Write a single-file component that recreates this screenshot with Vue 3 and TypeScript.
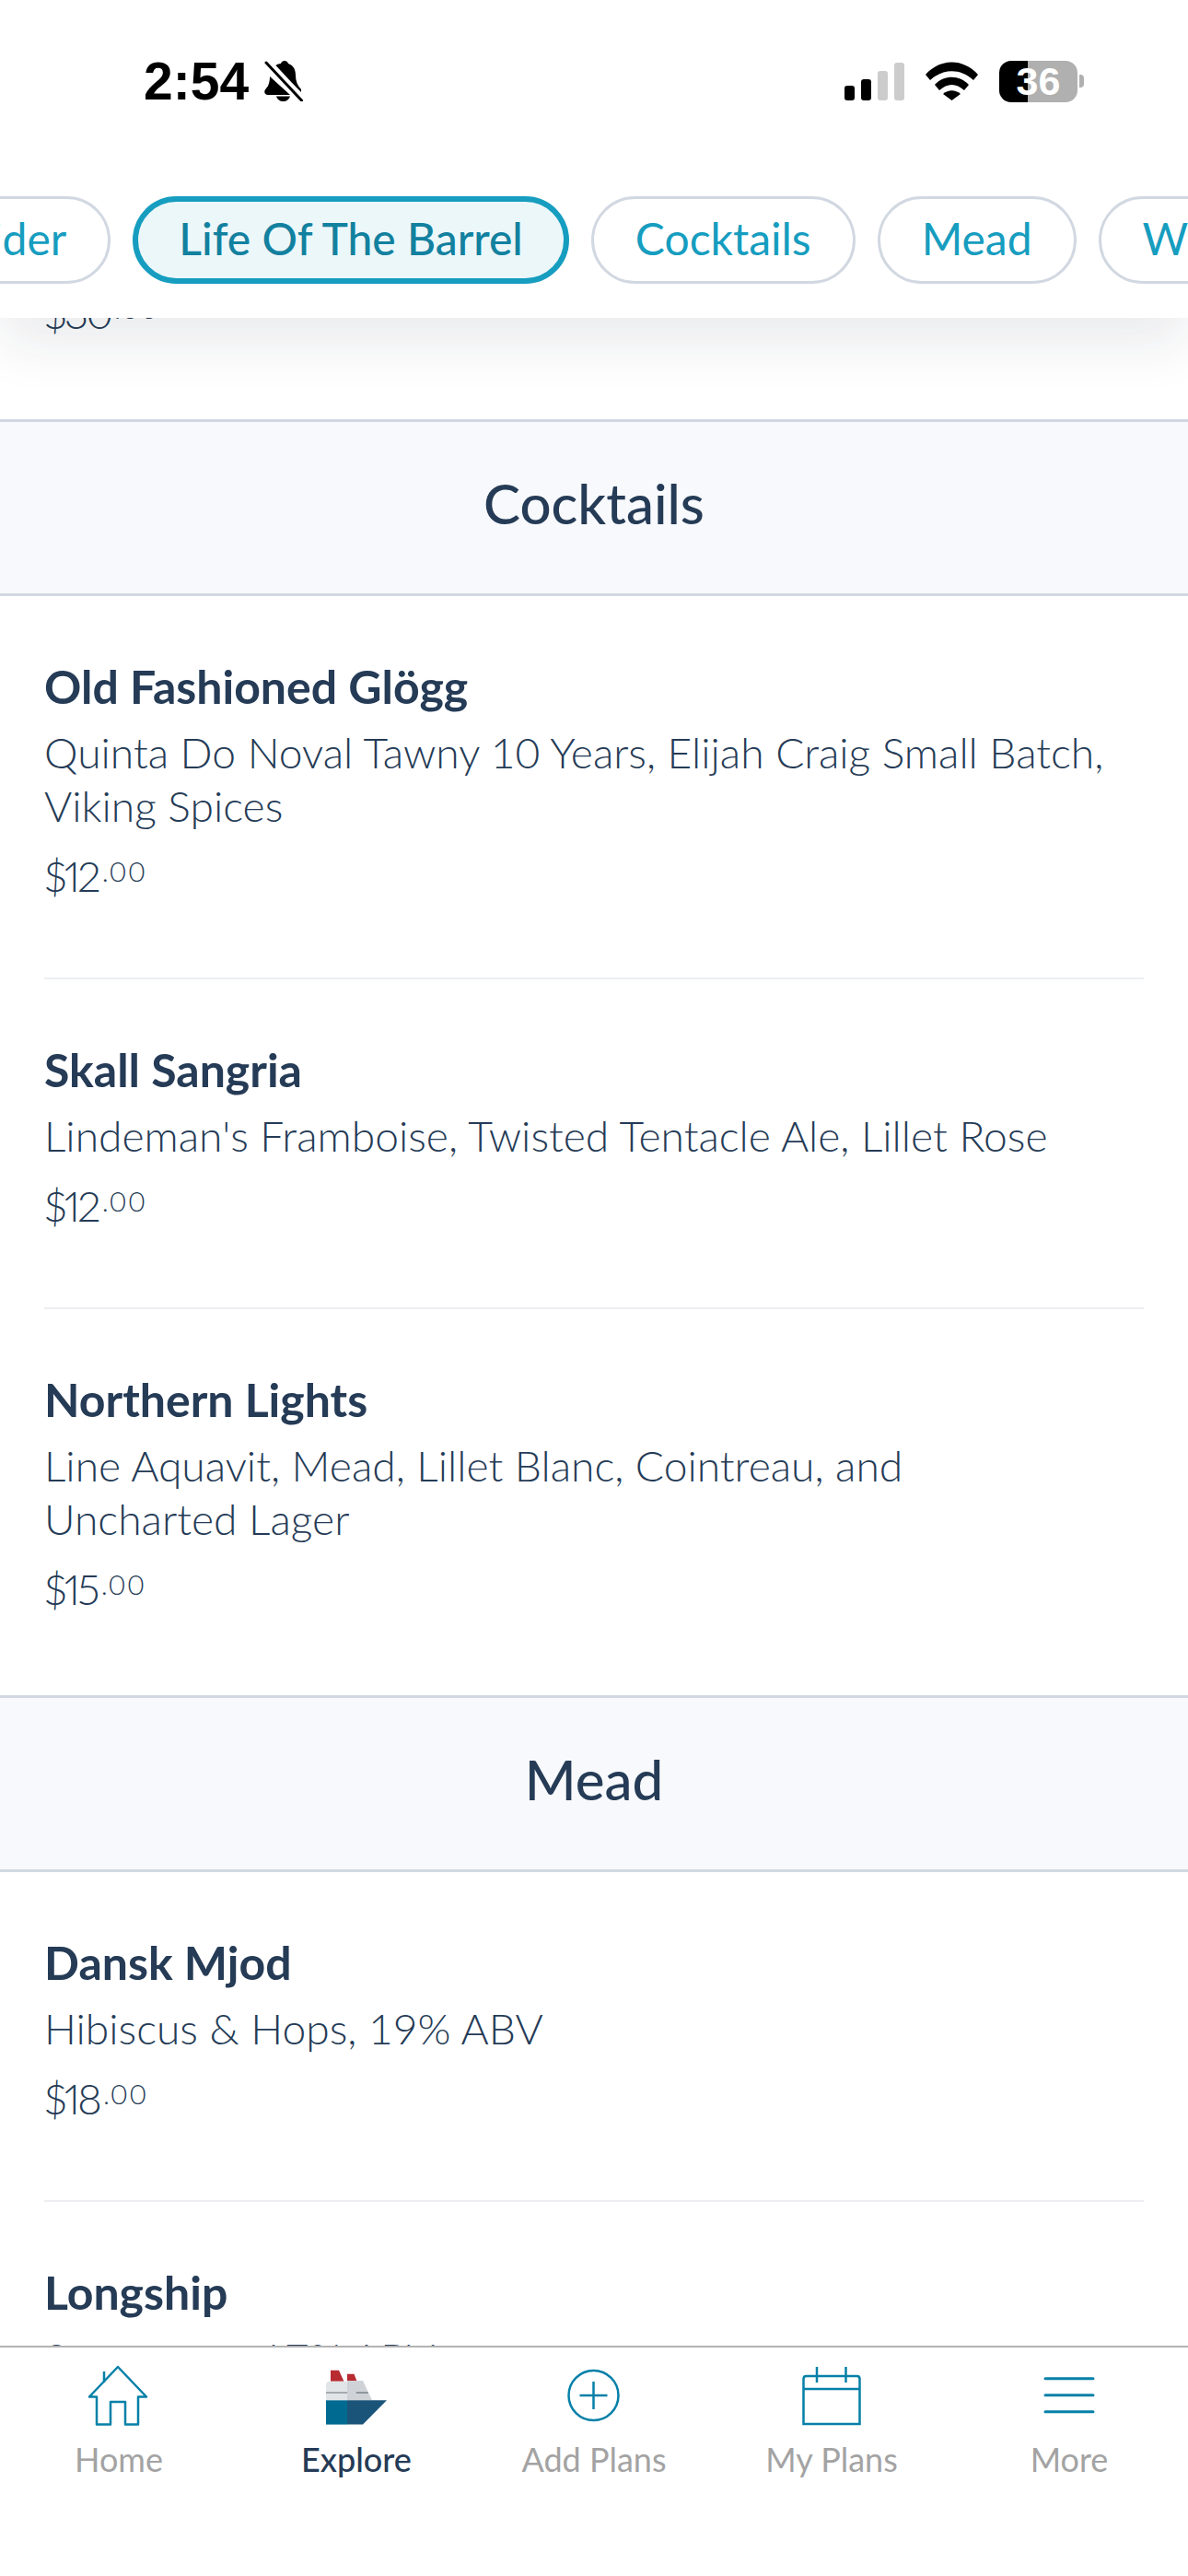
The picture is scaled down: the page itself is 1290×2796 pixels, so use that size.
<script setup lang="ts">
interface MenuItem {
  name: string;
  desc: string[];
  price: string;
}

interface Section {
  title: string;
  items: MenuItem[];
}

const pills = ["Cider", "Life Of The Barrel", "Cocktails", "Mead", "Wine"];

const sections: Section[] = [
  {
    title: "Cocktails",
    items: [
      {
        name: "Old Fashioned Glögg",
        desc: ["Quinta Do Noval Tawny 10 Years, Elijah Craig Small Batch,", "Viking Spices"],
        price: "$12",
      },
      {
        name: "Skall Sangria",
        desc: ["Lindeman's Framboise, Twisted Tentacle Ale, Lillet Rose"],
        price: "$12",
      },
      {
        name: "Northern Lights",
        desc: ["Line Aquavit, Mead, Lillet Blanc, Cointreau, and", "Uncharted Lager"],
        price: "$15",
      },
    ],
  },
  {
    title: "Mead",
    items: [
      { name: "Dansk Mjod", desc: ["Hibiscus & Hops, 19% ABV"], price: "$18" },
      { name: "Longship", desc: ["Sweetness, 17% ABV"], price: "$16" },
    ],
  },
];

const navItems = ["Home", "Explore", "Add Plans", "My Plans", "More"];
</script>

<template>
  <div class="screen">
    <header class="top">
      <div class="status">
        <div class="time">
          <span>2:54</span>
          <svg width="42" height="44" viewBox="0 0 42 44">
            <path d="M11 6c2-2 5-3 7-3 1-4 7-4 8 0 6 2 8 7 8 13 0 6 2 11 6 15v3z" fill="#000" />
            <path d="M6 17l22 20H4c-4 0-5-4-2-7 3-3 4-8 4-13z" fill="#000" />
            <path d="M13 38.500h15c-1 3.500-4 5.500-7.500 5.500S14 42 13 38.500z" fill="#000" />
            <path d="M3 0l40 43" stroke="#fff" stroke-width="7" />
            <path d="M2 2l38.500 41" stroke="#000" stroke-width="3" stroke-linecap="round" />
          </svg>
        </div>
        <div class="indicators">
          <svg width="65" height="41" viewBox="0 0 65 41">
            <rect x="0" y="25" width="11" height="16" rx="3" fill="#000" />
            <rect x="18" y="18" width="11" height="23" rx="3" fill="#000" />
            <rect x="36" y="9" width="11" height="32" rx="3" fill="#ccc" />
            <rect x="54" y="0" width="11" height="41" rx="3" fill="#ccc" />
          </svg>
          <svg width="57" height="42" viewBox="0 0 57 42">
            <path d="M0 14C16-4 41-4 57 14l-5 6C38 7 19 7 5 20z" fill="#000" />
            <path d="M10 25C20 14 37 14 47 25l-5 6C33 23 24 23 15 31z" fill="#000" />
            <path d="M19 35c6-5 13-5 19 0l-9.500 7z" fill="#000" />
          </svg>
          <div class="battery">
            <div class="battery-body">
              <span>36</span>
            </div>
            <div class="battery-cap"></div>
          </div>
        </div>
      </div>
      <div class="pills">
        <button v-for="(pill, i) in pills" :key="pill" class="pill" :class="{ active: i === 1 }">
          {{ pill }}
        </button>
      </div>
    </header>

    <main class="content">
      <div class="clipped-price">$30<sup>.00</sup></div>
      <section v-for="section in sections" :key="section.title">
        <h2 class="section-title">{{ section.title }}</h2>
        <div class="items">
          <article v-for="item in section.items" :key="item.name" class="item">
            <h3>{{ item.name }}</h3>
            <p class="desc">
              <span v-for="line in item.desc" :key="line">{{ line }}</span>
            </p>
            <p class="price">{{ item.price }}<sup>.00</sup></p>
          </article>
        </div>
      </section>
    </main>

    <nav class="nav">
      <div v-for="(label, i) in navItems" :key="label" class="nav-item" :class="{ current: i === 1 }">
        <svg class="nav-icon" width="70" height="70" viewBox="0 0 70 70">
          <template v-if="i === 0">
            <path
              d="M34 2 65 34.500H56V64.500H42V40H26V64.500H11V34.500H3zM19 7V19"
              fill="none"
              stroke="#0680a8"
              stroke-width="2.500"
              stroke-linejoin="round"
            />
          </template>
          <template v-else-if="i === 1">
            <path d="M7 5.700h9l5.500 12H7z" fill="#b72b31" />
            <path d="M25 9.700h7.500l3 8H25z" fill="#b72b31" />
            <path d="M2 22c0-3 1.500-4.300 4-4.300h19v20.600H2z" fill="#e2e5e8" />
            <path d="M25 17h17l10 21.300H25z" fill="#cfd3d7" />
            <rect x="2" y="29" width="23" height="2" fill="#a5abb0" />
            <rect x="34.700" y="29" width="13" height="2" fill="#8f979d" />
            <path d="M2 38.300h23v26.300H2z" fill="#006a91" />
            <path d="M25 38.300h43L42 64.600H25z" fill="#1a5479" />
          </template>
          <template v-else-if="i === 2">
            <circle cx="34.500" cy="33" r="27" fill="none" stroke="#0680a8" stroke-width="2.500" />
            <path d="M34.500 18v30M19.500 33h30" fill="none" stroke="#0680a8" stroke-width="2.500" />
          </template>
          <template v-else-if="i === 3">
            <path
              d="M4.500 64V15c0-2 1-3 3-3h55c2 0 3 1 3 3v49zM4.500 26h61M19 2v17M50.500 2v17"
              fill="none"
              stroke="#0680a8"
              stroke-width="2.500"
            />
          </template>
          <template v-else>
            <path
              d="M9 14.700h52M9 32.700h52M9 50.700h52"
              fill="none"
              stroke="#0680a8"
              stroke-width="3"
              stroke-linecap="round"
            />
          </template>
        </svg>
        <span>{{ label }}</span>
      </div>
    </nav>
  </div>
</template>

<style scoped>
.screen {
  display: flex;
  flex-direction: column;
  width: 1290px;
  height: 2796px;
  overflow: hidden;
  background: #fff;
  font-family: Lato, "Open Sans", sans-serif;
  color: #253b56;
}

.top {
  position: relative;
  z-index: 2;
  flex: none;
  height: 345px;
  background: #fff;
  box-shadow: 0 28px 56px rgba(20, 30, 50, 0.09);
}

.status {
  display: flex;
  justify-content: space-between;
  align-items: center;
  height: 176px;
  padding: 0 113px 0 156px;
}

.time {
  display: flex;
  align-items: center;
  gap: 17px;
  font-family: "Liberation Sans", sans-serif;
  font-size: 57px;
  font-weight: 700;
  color: #000;
}

.indicators {
  display: flex;
  align-items: center;
  gap: 23px;
}

.battery {
  display: flex;
  align-items: center;
  gap: 2px;
}

.battery-body {
  display: flex;
  align-items: center;
  justify-content: center;
  width: 85px;
  height: 45px;
  border-radius: 13px;
  background: linear-gradient(90deg, #000 36%, #b0b0b0 36%);
  color: #fff;
  font-family: "Liberation Sans", sans-serif;
  font-size: 43px;
  font-weight: 700;
}

.battery-cap {
  width: 5px;
  height: 14px;
  border-radius: 0 4px 4px 0;
  background: #b0b0b0;
}

.pills {
  display: flex;
  gap: 24px;
  margin-top: 37px;
  margin-left: -89px;
}

.pill {
  flex: none;
  height: 95px;
  padding: 0 45px 5px;
  border: 3px solid #d2d8e1;
  border-radius: 48px;
  background: #fff;
  color: #169dbf;
  font: inherit;
  font-size: 48px;
}

.pill.active {
  padding: 0 44px 5px;
  border: 6px solid #169dbf;
  background: #ecf7fa;
  color: #12819f;
  font-weight: 500;
}

.content {
  flex: 1;
  min-height: 0;
  overflow: hidden;
}

.clipped-price {
  height: 110px;
  padding-left: 48px;
  font-size: 46px;
  font-weight: 300;
  font-variant-numeric: proportional-nums;
  line-height: 1;
  letter-spacing: -3px;
  transform: translateY(-28px);
}

.clipped-price sup {
  margin-left: 4px;
  font-size: 30px;
  line-height: 0;
  letter-spacing: 1px;
  vertical-align: 11px;
}

.section-title {
  display: flex;
  align-items: center;
  justify-content: center;
  box-sizing: border-box;
  height: 192px;
  margin: 0;
  padding-bottom: 10px;
  border-top: 3px solid #d2d8e1;
  border-bottom: 3px solid #d2d8e1;
  background: #f7f9fc;
  font-size: 60px;
  font-weight: 500;
}

.items {
  padding: 0 48px;
}

.item {
  padding: 70px 0 82px;
  border-bottom: 2px solid #eceef1;
}

.item h3 {
  margin: 0;
  font-size: 50px;
  font-weight: 700;
  line-height: 56px;
}

section:first-of-type .item:last-child {
  padding-bottom: 87px;
  border-bottom: none;
}

.desc {
  display: flex;
  flex-direction: column;
  margin: 14px 0 0;
  font-size: 46.200px;
  font-weight: 300;
  line-height: 58px;
}

.price {
  margin: 20px 0 0;
  font-size: 46px;
  font-weight: 300;
  font-variant-numeric: proportional-nums;
  line-height: 56px;
  letter-spacing: -3px;
}

.price sup {
  margin-left: 4px;
  font-size: 30px;
  line-height: 0;
  letter-spacing: 1px;
  vertical-align: 11px;
}

.nav {
  position: relative;
  z-index: 2;
  display: grid;
  flex: none;
  grid-template-columns: repeat(5, 1fr);
  box-sizing: border-box;
  height: 250px;
  border-top: 2px solid #b3b3b3;
  background: #fff;
}

.nav-item {
  display: flex;
  flex-direction: column;
  align-items: center;
  padding-top: 19px;
  color: #a3a3a3;
  font-size: 36px;
}

.nav-item.current {
  color: #253b56;
  font-weight: 500;
}

.nav-icon {
  margin-bottom: 10px;
}
</style>

<style>
html,
body {
  margin: 0;
  background: #fff;
}
</style>
